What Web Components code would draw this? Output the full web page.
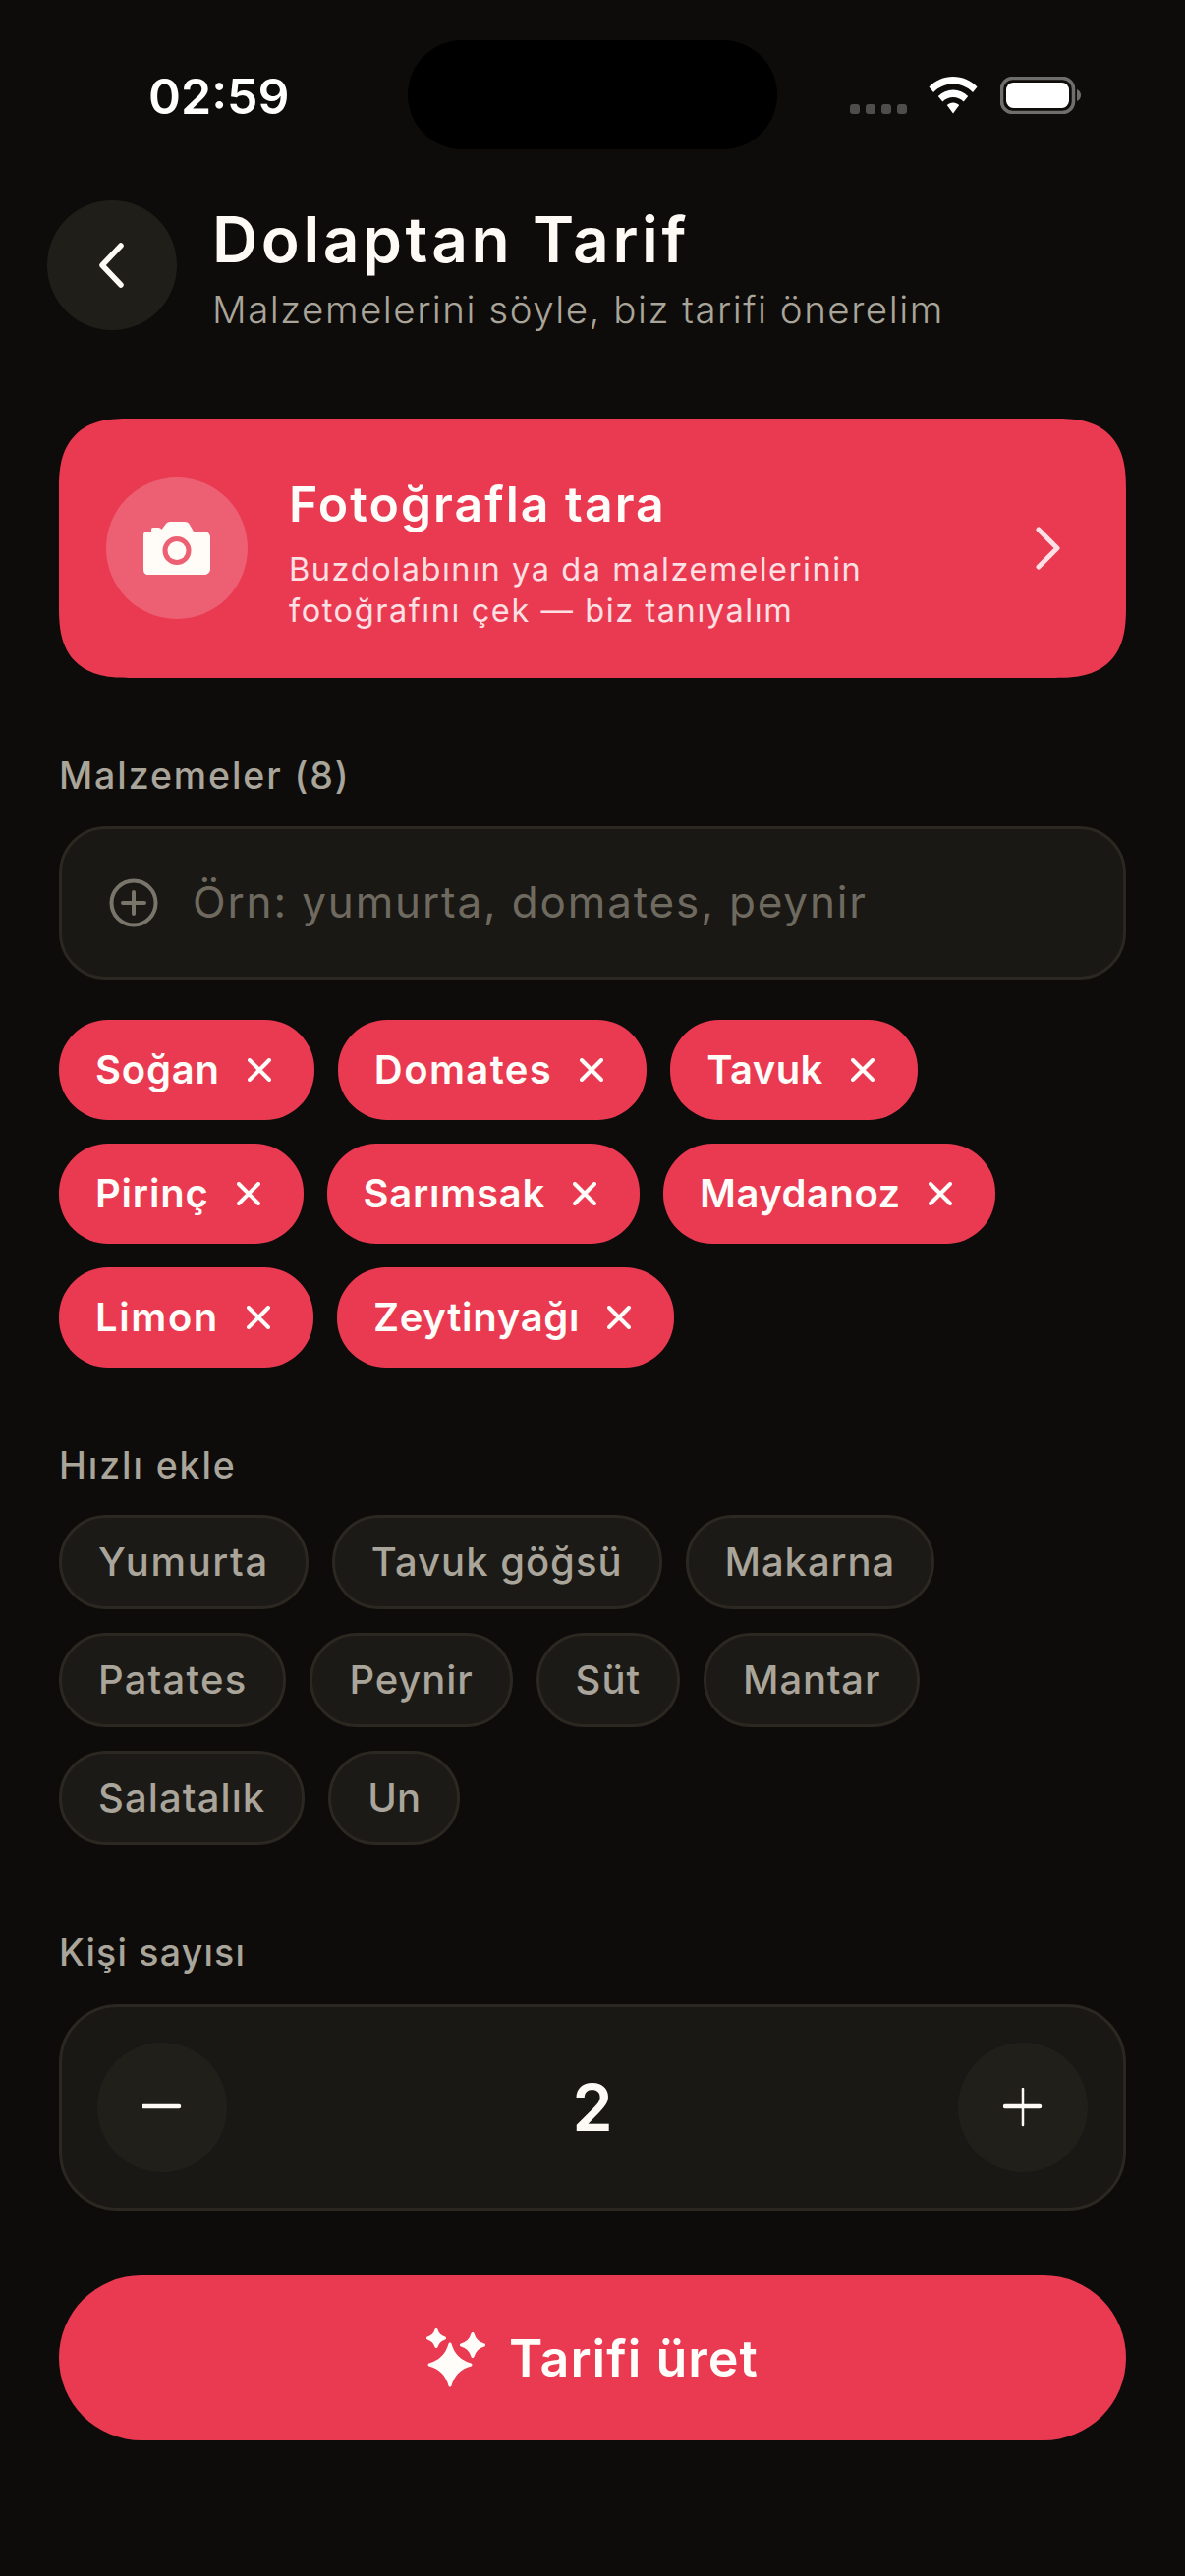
<!DOCTYPE html>
<html lang="tr">
<head>
<meta charset="utf-8">
<title>Dolaptan Tarif</title>
<style>
  html, body { margin: 0; background: #0e0c0a; }
  body { width: 1206px; height: 2622px; overflow: hidden; font-family: Inter, "Open Sans", sans-serif; color: #fdfaf6; }
  app-screen { --red: #e93a52; --muted: #aaa59a; }
</style>
</head>
<body>

<app-screen>
  <status-bar slot="top"></status-bar>
  <page-header title="Dolaptan Tarif" sub="Malzemelerini söyle, biz tarifi önerelim"></page-header>
  <scan-card></scan-card>

  <section-label style="margin-top:77px">Malzemeler (8)</section-label>
  <add-input style="margin-top:28px">Örn: yumurta, domates, peynir</add-input>

  <chip-group style="margin-top:41px">
    <tag-chip style="--ls:.8px">Soğan</tag-chip><tag-chip style="--ls:1.4px">Domates</tag-chip><tag-chip style="--ls:.4px">Tavuk</tag-chip>
    <tag-chip style="--ls:.8px">Pirinç</tag-chip><tag-chip style="--ls:.75px">Sarımsak</tag-chip><tag-chip style="--ls:.5px">Maydanoz</tag-chip>
    <tag-chip style="--ls:1.6px">Limon</tag-chip><tag-chip style="--ls:.7px">Zeytinyağı</tag-chip>
  </chip-group>

  <section-label style="margin-top:77px">Hızlı ekle</section-label>
  <chip-group style="margin-top:27px">
    <quick-chip style="--ls:1.6px">Yumurta</quick-chip><quick-chip style="--ls:1px">Tavuk göğsü</quick-chip><quick-chip style="--ls:.95px">Makarna</quick-chip>
    <quick-chip style="--ls:1.2px">Patates</quick-chip><quick-chip style="--ls:.9px">Peynir</quick-chip><quick-chip style="--ls:1px">Süt</quick-chip><quick-chip style="--ls:.8px">Mantar</quick-chip>
    <quick-chip style="--ls:1.1px">Salatalık</quick-chip><quick-chip>Un</quick-chip>
  </chip-group>

  <section-label style="margin-top:87px;letter-spacing:1.2px">Kişi sayısı</section-label>
  <person-stepper style="margin-top:29px" value="2"></person-stepper>
  <cta-button style="margin-top:66px">Tarifi üret</cta-button>
</app-screen>

<script>
  class AppScreen extends HTMLElement {
    constructor() {
      super();
      this.attachShadow({mode: 'open'}).innerHTML = `
        <style>
          :host { display: block; }
          main { display: flex; flex-direction: column; padding: 0 60px; }
          main ::slotted(*) { flex: none; }
        </style>
        <slot name="top"></slot>
        <main><slot></slot></main>
      `;
    }
  }
  customElements.define('app-screen', AppScreen);

  class StatusBar extends HTMLElement {
    constructor() {
      super();
      this.attachShadow({mode: 'open'}).innerHTML = `
        <style>
          :host { display: flex; height: 204px; box-sizing: border-box; padding: 41px 106px 0 151px; position: relative; justify-content: space-between; align-items: flex-start; }
          .time { font: 600 50px/1 Inter, sans-serif; margin-top: 32px; color: #fff; }
          .island { position: absolute; left: 415px; top: 41px; width: 376px; height: 111px; border-radius: 56px; background: #000; }
          .icons { display: flex; align-items: flex-start; margin-top: 37px; }
          .dots { display: flex; gap: 6px; margin-top: 28px; margin-right: 22px; }
          .dots i { width: 10px; height: 10px; border-radius: 3px; background: #4d4d4b; }
          svg { display: block; }
        </style>
        <span class="time">02:59</span>
        <div class="island"></div>
        <div class="icons">
          <div class="dots"><i></i><i></i><i></i><i></i></div>
          <svg width="50" height="38" viewBox="0 0 50 38" style="margin-right:23px">
            <path d="M25 0C15.500 0 7 3.800 0.500 10.500L5 16C10.300 10.500 17.300 7.500 25 7.500S39.700 10.500 45 16L49.500 10.500C43 3.800 34.500 0 25 0Z" fill="#fff"/>
            <path d="M25 13.500C19.300 13.500 14 15.800 9.800 20L14.300 25.500C17.200 22.700 21 21 25 21S32.800 22.700 35.700 25.500L40.200 20C36 15.800 30.700 13.500 25 13.500Z" fill="#fff"/>
            <path d="M25 26.500C22.700 26.500 20.500 27.400 18.800 29L25 37.500L31.200 29C29.500 27.400 27.300 26.500 25 26.500Z" fill="#fff"/>
          </svg>
          <svg width="82" height="38" viewBox="0 0 82 38">
            <rect x="1.500" y="1.500" width="73" height="35" rx="11" fill="none" stroke="#6e6e6c" stroke-width="3.500"/>
            <rect x="6" y="6" width="64" height="26" rx="7.500" fill="#fff"/>
            <path d="M78 13C80.500 14 82 16.300 82 19S80.500 24 78 25Z" fill="#6e6e6c"/>
          </svg>
        </div>
      `;
    }
  }
  customElements.define('status-bar', StatusBar);

  class PageHeader extends HTMLElement {
    constructor() {
      super();
      this.attachShadow({mode: 'open'}).innerHTML = `
        <style>
          :host { display: flex; align-items: center; gap: 36px; margin-left: -12px; height: 132px; }
          button { width: 132px; height: 132px; border-radius: 50%; border: 0; background: #201e19; padding: 0 3px 0 0; display: grid; place-items: center; flex: none; }
          h1 { margin: 0; font: 600 64px/78px Inter, sans-serif; letter-spacing: 3.6px; }
          p { margin: 9px 0 0; font: 300 38.500px/46px Inter, sans-serif; color: var(--muted); letter-spacing: 1.5px; }
          .txt { margin-top: 3px; }
        </style>
        <button aria-label="Geri">
          <svg width="32" height="48" viewBox="0 0 32 48"><path d="M26 4 7 24l19 20" fill="none" stroke="#fdfaf6" stroke-width="5.500" stroke-linecap="round" stroke-linejoin="round"/></svg>
        </button>
        <div class="txt"><h1></h1><p></p></div>
      `;
      this.shadowRoot.querySelector('h1').textContent = this.getAttribute('title');
      this.shadowRoot.querySelector('p').textContent = this.getAttribute('sub');
    }
  }
  customElements.define('page-header', PageHeader);

  class ScanCard extends HTMLElement {
    constructor() {
      super();
      this.attachShadow({mode: 'open'}).innerHTML = `
        <style>
          :host { display: flex; align-items: center; margin-top: 90px; height: 264px; box-sizing: border-box; padding: 0 65px 0 48px; background: var(--red); border-radius: 72px; corner-shape: superellipse(1.4); }
          .ic { width: 144px; height: 144px; border-radius: 50%; background: #ed6073; display: grid; place-items: center; flex: none; margin-right: 42px; }
          .txt { flex: 1; margin-top: 10px; }
          h2 { margin: 0 0 16px; font: 600 50px/60px Inter, sans-serif; letter-spacing: 2px; color: #fffdf9; }
          p { margin: 0; font: 400 32.500px/42px Inter, sans-serif; color: #fde0e3; letter-spacing: 1.57px; }
          svg { display: block; }
        </style>
        <div class="ic">
          <svg width="68" height="54" viewBox="0 0 68 54">
            <path fill="#fffbf6" fill-rule="evenodd" d="M3 10H8V8C8 6 9.500 6 11 6H15C17 6 18 7 18.500 8L23 2C24 .7 25.500 0 27 0H42C44 0 45.500 .8 46.500 2.300L51 10H62C65.500 10 68 12.500 68 16V48C68 51.500 65.500 54 62 54H5C2 54 0 52 0 49V13C0 11.500 1.500 10 3 10ZM34 15A14.500 14.500 0 1 0 34 44A14.500 14.500 0 1 0 34 15Z"/>
            <circle cx="34" cy="29.500" r="9.500" fill="#fffbf6"/>
          </svg>
        </div>
        <div class="txt">
          <h2>Fotoğrafla tara</h2>
          <p>Buzdolabının ya da malzemelerinin<br>fotoğrafını çek — biz tanıyalım</p>
        </div>
        <svg width="29" height="44" viewBox="0 0 29 44"><path d="M5 3 24 22 5 41" fill="none" stroke="#fde0e3" stroke-width="5" stroke-linecap="round" stroke-linejoin="round"/></svg>
      `;
    }
  }
  customElements.define('scan-card', ScanCard);

  class SectionLabel extends HTMLElement {
    constructor() {
      super();
      this.attachShadow({mode: 'open'}).innerHTML = `
        <style>
          :host { display: block; font: 500 37.500px/46px Inter, sans-serif; color: var(--muted); letter-spacing: 1.9px; }
        </style>
        <slot></slot>
      `;
    }
  }
  customElements.define('section-label', SectionLabel);

  class AddInput extends HTMLElement {
    constructor() {
      super();
      this.attachShadow({mode: 'open'}).innerHTML = `
        <style>
          :host { display: flex; align-items: center; gap: 35px; height: 156px; box-sizing: border-box; padding: 0 48px; background: #1a1814; border: 3px solid #2b2721; border-radius: 48px; }
          span { font: 400 44px/56px Inter, sans-serif; color: #6f6a60; letter-spacing: 1.85px; margin-top: -2px; }
          svg { display: block; flex: none; }
        </style>
        <svg width="50" height="50" viewBox="0 0 50 50" fill="none" stroke="#7a756b" stroke-width="4" stroke-linecap="round"><circle cx="25" cy="25" r="22.500"/><path d="M25 14V36M14 25H36"/></svg>
        <span><slot></slot></span>
      `;
    }
  }
  customElements.define('add-input', AddInput);

  class ChipGroup extends HTMLElement {
    constructor() {
      super();
      this.attachShadow({mode: 'open'}).innerHTML = `
        <style>:host { display: flex; flex-wrap: wrap; gap: 24px; }</style>
        <slot></slot>
      `;
    }
  }
  customElements.define('chip-group', ChipGroup);

  class TagChip extends HTMLElement {
    constructor() {
      super();
      this.attachShadow({mode: 'open'}).innerHTML = `
        <style>
          :host { display: inline-flex; align-items: center; gap: 28px; height: 102px; box-sizing: border-box; padding: 0 44px 0 37px; background: var(--red); border-radius: 50px; font: 600 40px/50px Inter, sans-serif; color: #fffdf9; letter-spacing: var(--ls, 0); }
          svg { display: block; flex: none; }
        </style>
        <span><slot></slot></span>
        <svg width="24" height="24" viewBox="0 0 24 24"><path d="M2 2 22 22M22 2 2 22" fill="none" stroke="#fffdf9" stroke-width="4" stroke-linecap="round"/></svg>
      `;
    }
  }
  customElements.define('tag-chip', TagChip);

  class QuickChip extends HTMLElement {
    constructor() {
      super();
      this.attachShadow({mode: 'open'}).innerHTML = `
        <style>
          :host { display: inline-flex; align-items: center; height: 96px; box-sizing: border-box; padding: 0 37px; background: #1c1a16; border: 3px solid #2b2721; border-radius: 48px; font: 500 40px/50px Inter, sans-serif; color: var(--muted); letter-spacing: var(--ls, 0); }
        </style>
        <slot></slot>
      `;
    }
  }
  customElements.define('quick-chip', QuickChip);

  class PersonStepper extends HTMLElement {
    constructor() {
      super();
      this.attachShadow({mode: 'open'}).innerHTML = `
        <style>
          :host { display: flex; align-items: center; justify-content: space-between; height: 210px; box-sizing: border-box; padding: 0 36px; background: #1a1814; border: 3px solid #2b2721; border-radius: 60px; }
          button { width: 132px; height: 132px; border: 0; padding: 0; border-radius: 50%; background: #211f1a; display: grid; place-items: center; }
          b { font: 600 66px/80px Inter, sans-serif; color: #fdfaf6; }
          svg { display: block; }
        </style>
        <button aria-label="Azalt"><svg width="40" height="40" viewBox="0 0 40 40"><path d="M1 19H37" stroke="#fdfaf6" stroke-width="4.500" stroke-linecap="round"/></svg></button>
        <b></b>
        <button aria-label="Arttır"><svg width="40" height="40" viewBox="0 0 40 40"><path d="M2 19H37" stroke="#fdfaf6" stroke-width="4.500" stroke-linecap="round"/><path d="M20 1V38" stroke="#fdfaf6" stroke-width="2.500" stroke-linecap="round"/></svg></button>
      `;
      this.shadowRoot.querySelector('b').textContent = this.getAttribute('value');
    }
  }
  customElements.define('person-stepper', PersonStepper);

  class CtaButton extends HTMLElement {
    constructor() {
      super();
      this.attachShadow({mode: 'open'}).innerHTML = `
        <style>
          :host { display: flex; align-items: center; justify-content: center; gap: 24px; height: 168px; background: var(--red); border-radius: 84px; font: 600 52px/64px Inter, sans-serif; color: #fffdf9; letter-spacing: 1px; }
          span { margin-top: 2px; }
          svg { display: block; flex: none; }
        </style>
        <svg width="60" height="61" viewBox="0 0 60 61" fill="#fffdf9" stroke="#fffdf9" stroke-width="3" stroke-linejoin="round">
          <path d="M24 16Q28.500 32.500 45 37Q28.500 41.500 24 58Q19.500 41.500 3 37Q19.500 32.500 24 16Z"/>
          <path d="M10 1.500Q12 8 18.500 10Q12 12 10 18.500Q8 12 1.500 10Q8 8 10 1.500Z"/>
          <path d="M47 5.500Q49.500 14.500 58.500 17Q49.500 19.500 47 28.500Q44.500 19.500 35.500 17Q44.500 14.500 47 5.500Z"/>
        </svg>
        <span><slot></slot></span>
      `;
    }
  }
  customElements.define('cta-button', CtaButton);
</script>
</body>
</html>
